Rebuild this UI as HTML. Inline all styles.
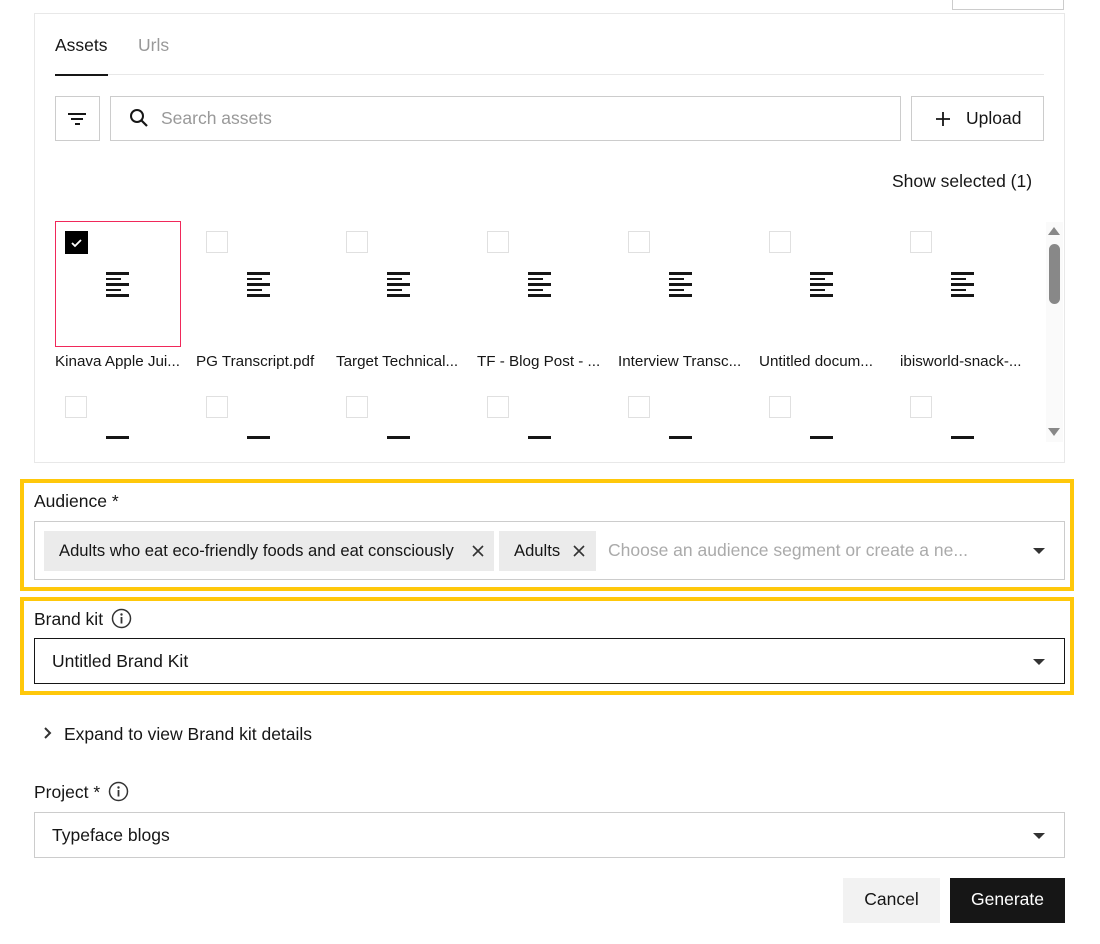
<!DOCTYPE html>
<html><head><style>
*{box-sizing:border-box;margin:0;padding:0}
body{width:1100px;height:944px;background:#fff;font-family:"Liberation Sans",Arial,sans-serif;color:#161616;position:relative;overflow:hidden;font-size:17.5px}
.a{position:absolute}
.cb{position:absolute;width:22px;height:22px;border:1px solid #e0e0e0;background:#fff}
.doc{position:absolute;width:23px}
.doc i{display:block;height:2.5px;background:#161616;margin-bottom:3px}
.lbl{position:absolute;font-size:15.2px;white-space:nowrap;top:353px}
.caret{position:absolute;width:0;height:0;border-left:6px solid transparent;border-right:6px solid transparent;border-top:6px solid #333}
.info{position:absolute;width:21px;height:21px}
</style></head><body>
<div class="a" style="left:952px;top:-2px;width:112px;height:12px;border:1px solid #ccc"></div>
<div class="a" style="left:34px;top:13px;width:1031px;height:450px;border:1px solid #e8e8e8"></div>
<div class="a" style="left:55px;top:35px">Assets</div>
<div class="a" style="left:138px;top:35px;color:#999">Urls</div>
<div class="a" style="left:55px;top:74px;width:989px;height:1px;background:#e8e8e8"></div>
<div class="a" style="left:55px;top:74px;width:53px;height:2px;background:#161616"></div>
<div class="a" style="left:55px;top:96px;width:45px;height:45px;border:1px solid #ccc"></div>
<div class="a" style="left:68px;top:113px;width:18px;height:2px;background:#161616"></div>
<div class="a" style="left:71px;top:118px;width:12px;height:2px;background:#161616"></div>
<div class="a" style="left:75px;top:123px;width:5px;height:2px;background:#161616"></div>
<div class="a" style="left:110px;top:96px;width:791px;height:45px;border:1px solid #ccc"></div>
<svg class="a" style="left:128px;top:107px" width="22" height="22" viewBox="0 0 22 22"><circle cx="9" cy="9" r="6" fill="none" stroke="#161616" stroke-width="2"/><line x1="13.5" y1="13.5" x2="19" y2="19" stroke="#161616" stroke-width="2.2"/></svg>
<div class="a" style="left:161px;top:108px;color:#999">Search assets</div>
<div class="a" style="left:911px;top:96px;width:133px;height:45px;border:1px solid #ccc"></div>
<svg class="a" style="left:935px;top:111px" width="16" height="16" viewBox="0 0 16 16"><path d="M8 1v14M1 8h14" stroke="#161616" stroke-width="1.8"/></svg>
<div class="a" style="left:966px;top:108px">Upload</div>
<div class="a" style="left:892px;top:171px">Show selected (1)</div>
<div class="a" style="left:1046px;top:222px;width:17px;height:220px;background:#fafafa"></div>
<div class="a" style="left:1048px;top:227px;border-left:6px solid transparent;border-right:6px solid transparent;border-bottom:8px solid #888"></div>
<div class="a" style="left:1049px;top:244px;width:11px;height:60px;border-radius:6px;background:#888"></div>
<div class="a" style="left:1048px;top:428px;border-left:6px solid transparent;border-right:6px solid transparent;border-top:8px solid #888"></div>
<div class="a" style="left:55px;top:221px;width:126px;height:126px;border:1px solid #f0285a"></div>
<div class="a" style="left:65px;top:231px;width:23px;height:23px;background:#000"></div>
<svg class="a" style="left:65px;top:231px" width="23" height="23" viewBox="0 0 23 23"><path d="M7 12l3 3 6-6" fill="none" stroke="#fff" stroke-width="1.8"/></svg>

<div class="cb" style="left:206px;top:231px"></div><div class="cb" style="left:346px;top:231px"></div><div class="cb" style="left:487px;top:231px"></div><div class="cb" style="left:628px;top:231px"></div><div class="cb" style="left:769px;top:231px"></div><div class="cb" style="left:910px;top:231px"></div>
<div class="doc" style="left:106px;top:272px"><i></i><i style="width:15px"></i><i></i><i style="width:15px"></i><i></i></div>
<div class="doc" style="left:247px;top:272px"><i></i><i style="width:15px"></i><i></i><i style="width:15px"></i><i></i></div>
<div class="doc" style="left:387px;top:272px"><i></i><i style="width:15px"></i><i></i><i style="width:15px"></i><i></i></div>
<div class="doc" style="left:528px;top:272px"><i></i><i style="width:15px"></i><i></i><i style="width:15px"></i><i></i></div>
<div class="doc" style="left:669px;top:272px"><i></i><i style="width:15px"></i><i></i><i style="width:15px"></i><i></i></div>
<div class="doc" style="left:810px;top:272px"><i></i><i style="width:15px"></i><i></i><i style="width:15px"></i><i></i></div>
<div class="doc" style="left:951px;top:272px"><i></i><i style="width:15px"></i><i></i><i style="width:15px"></i><i></i></div>
<div class="lbl" style="left:55px">Kinava Apple Jui...</div>
<div class="lbl" style="left:196px">PG Transcript.pdf</div>
<div class="lbl" style="left:336px">Target Technical...</div>
<div class="lbl" style="left:477px">TF - Blog Post - ...</div>
<div class="lbl" style="left:618px">Interview Transc...</div>
<div class="lbl" style="left:759px">Untitled docum...</div>
<div class="lbl" style="left:900px">ibisworld-snack-...</div>
<div class="cb" style="left:65px;top:396px"></div><div class="cb" style="left:206px;top:396px"></div><div class="cb" style="left:346px;top:396px"></div><div class="cb" style="left:487px;top:396px"></div><div class="cb" style="left:628px;top:396px"></div><div class="cb" style="left:769px;top:396px"></div><div class="cb" style="left:910px;top:396px"></div>
<div class="doc" style="left:106px;top:436px"><i></i></div><div class="doc" style="left:247px;top:436px"><i></i></div><div class="doc" style="left:387px;top:436px"><i></i></div><div class="doc" style="left:528px;top:436px"><i></i></div><div class="doc" style="left:669px;top:436px"><i></i></div><div class="doc" style="left:810px;top:436px"><i></i></div><div class="doc" style="left:951px;top:436px"><i></i></div>

<div class="a" style="left:20px;top:479px;width:1054px;height:112px;border:4px solid #ffc80a"></div>
<div class="a" style="left:34px;top:491px">Audience *</div>
<div class="a" style="left:34px;top:521px;width:1031px;height:59px;border:1px solid #ccc"></div>
<div class="a" style="left:44px;top:531px;width:450px;height:40px;background:#ebebeb"></div>
<div class="a" style="left:59px;top:541px;font-size:16.6px;white-space:nowrap">Adults who eat eco-friendly foods and eat consciously</div>
<svg class="a" style="left:472px;top:545px" width="12" height="12" viewBox="0 0 12 12"><path d="M1 1l10 10M11 1L1 11" stroke="#333" stroke-width="1.6"/></svg>
<div class="a" style="left:499px;top:531px;width:97px;height:40px;background:#ebebeb"></div>
<div class="a" style="left:514px;top:541px;font-size:16.6px">Adults</div>
<svg class="a" style="left:573px;top:545px" width="12" height="12" viewBox="0 0 12 12"><path d="M1 1l10 10M11 1L1 11" stroke="#333" stroke-width="1.6"/></svg>
<div class="a" style="left:608px;top:540px;color:#aaa;white-space:nowrap">Choose an audience segment or create a ne...</div>
<div class="caret" style="left:1033px;top:548px"></div>

<div class="a" style="left:20px;top:597px;width:1054px;height:98px;border:4px solid #ffc80a"></div>
<div class="a" style="left:34px;top:609px">Brand kit</div>
<svg class="info" style="left:111px;top:608px" viewBox="0 0 21 21"><circle cx="10.5" cy="10.5" r="9" fill="none" stroke="#333" stroke-width="1.5"/><circle cx="10.5" cy="6.5" r="1.2" fill="#333"/><path d="M10.5 9v6.5" stroke="#333" stroke-width="1.8"/></svg>
<div class="a" style="left:34px;top:638px;width:1031px;height:46px;border:1px solid #161616"></div>
<div class="a" style="left:52px;top:651px">Untitled Brand Kit</div>
<div class="caret" style="left:1033px;top:659px"></div>

<svg class="a" style="left:42px;top:726px" width="12" height="14" viewBox="0 0 12 14"><path d="M3 2l5 5-5 5" fill="none" stroke="#333" stroke-width="2"/></svg>
<div class="a" style="left:64px;top:724px">Expand to view Brand kit details</div>
<div class="a" style="left:34px;top:782px">Project *</div>
<svg class="info" style="left:108px;top:781px" viewBox="0 0 21 21"><circle cx="10.5" cy="10.5" r="9" fill="none" stroke="#333" stroke-width="1.5"/><circle cx="10.5" cy="6.5" r="1.2" fill="#333"/><path d="M10.5 9v6.5" stroke="#333" stroke-width="1.8"/></svg>
<div class="a" style="left:34px;top:812px;width:1031px;height:46px;border:1px solid #ccc"></div>
<div class="a" style="left:52px;top:825px">Typeface blogs</div>
<div class="caret" style="left:1033px;top:833px"></div>
<div class="a" style="left:843px;top:878px;width:97px;height:45px;background:#f2f2f2;text-align:center;line-height:43px">Cancel</div>
<div class="a" style="left:950px;top:878px;width:115px;height:45px;background:#161616;color:#fff;text-align:center;line-height:43px">Generate</div>
</body></html>
